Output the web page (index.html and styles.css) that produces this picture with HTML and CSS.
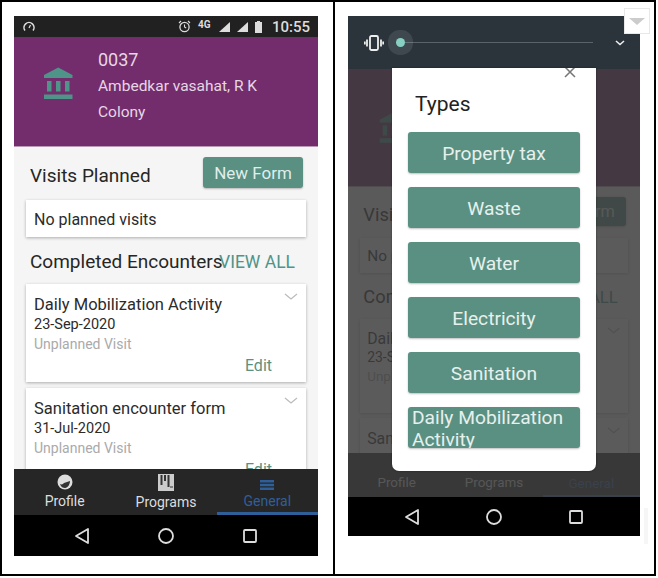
FILE: index.html
```html
<!DOCTYPE html>
<html lang="en">
<head>
    <meta charset="UTF-8">
    <title>Types</title>
    <link rel="stylesheet" href="styles.css">
</head>
<body>
<div class="frame">

    <div class="pane pane-left">
        <div class="phone phone-left">
            <div class="status">
                <svg class="status-gauge" width="12" height="12" viewBox="0 0 12 12"><path d="M2 9.500a5 5 0 1 1 8 0" fill="none" stroke="#ddd" stroke-width="1.600"/><path d="M6 7l1.500-3" stroke="#ddd" stroke-width="1.200"/></svg>
                <div class="status-right">
                    <svg width="13" height="13" viewBox="0 0 13 13"><circle cx="6.500" cy="7" r="4.600" fill="none" stroke="#ddd" stroke-width="1.300"/><path d="M6.500 4.500V7l1.700 1M1 3l2-2M12 3l-2-2" fill="none" stroke="#ddd" stroke-width="1.100"/></svg>
                    <span class="status-net">4G</span>
                    <svg width="14" height="12" viewBox="0 0 14 12"><path d="M13 1v10H2z" fill="#ddd"/></svg>
                    <svg class="status-signal" width="14" height="12" viewBox="0 0 14 12"><path d="M13 1v10H2z" fill="#ddd"/></svg>
                    <svg class="status-battery" width="7" height="12" viewBox="0 0 7 12"><path d="M2 0h3v1h2v11H0V1h2z" fill="#ddd"/></svg>
                    <span class="status-time">10:55</span>
                </div>
            </div>
            <div class="screen">
                <div class="hero">
                    <svg class="hero-icon" viewBox="0 0 24 24"><path d="M4 10v7h3v-7H4zm6 0v7h3v-7h-3zM2 22h19v-3H2v3zm14-12v7h3v-7h-3zm-4.500-9L2 6v2h19V6l-9.500-5z"/></svg>
                    <div class="hero-text">
                        <div class="hero-id">0037</div>
                        <div>Ambedkar vasahat, R K Colony</div>
                    </div>
                </div>
                <div class="main">
                    <div class="row-planned">
                        <span class="heading">Visits Planned</span>
                        <span class="new-form">New Form</span>
                    </div>
                    <div class="card card-empty">No planned visits</div>
                    <div class="row-completed">
                        <span class="heading">Completed Encounters</span>
                        <span class="view-all">VIEW ALL</span>
                    </div>
                    <div class="card card-visit">
                        <svg class="chevron" width="14" height="8" viewBox="0 0 14 8"><path d="M1 1l6 5 6-5" fill="none" stroke="#bbb" stroke-width="1.200"/></svg>
                        <div class="visit-title">Daily Mobilization Activity</div>
                        <div class="visit-date">23-Sep-2020</div>
                        <div class="visit-type">Unplanned Visit</div>
                        <div class="visit-edit">Edit</div>
                    </div>
                    <div class="card card-visit">
                        <svg class="chevron" width="14" height="8" viewBox="0 0 14 8"><path d="M1 1l6 5 6-5" fill="none" stroke="#bbb" stroke-width="1.200"/></svg>
                        <div class="visit-title">Sanitation encounter form</div>
                        <div class="visit-date">31-Jul-2020</div>
                        <div class="visit-type">Unplanned Visit</div>
                        <div class="visit-edit">Edit</div>
                    </div>
                </div>
                <div class="tabs">
                    <div class="tab">
                        <svg width="16" height="16" viewBox="0 0 16 16"><circle cx="8" cy="8" r="7.500" fill="#ddd"/><path d="M3 10c2 1 3 0 4-1l6-2c0 3-2 7-5 7-2 0-4-1-5-4z" fill="#333"/></svg>
                        <span>Profile</span>
                    </div>
                    <div class="tab">
                        <svg width="16" height="17" viewBox="0 0 16 17"><rect width="16" height="17" fill="#ccc"/><path d="M3.500 1v10M7 1v6M10.500 1v12" stroke="#333" stroke-width="2"/><path d="M12 13h3" stroke="#333"/></svg>
                        <span>Programs</span>
                    </div>
                    <div class="tab tab-active">
                        <svg width="14" height="10" viewBox="0 0 14 10"><path d="M0 0h14v2.500H0zM0 3.700h14v2.500H0zM0 7.500h14V10H0z" fill="#2f5f99"/></svg>
                        <span>General</span>
                    </div>
                </div>
            </div>
            <div class="nav">
                <svg width="16" height="18" viewBox="0 0 16 18"><path d="M14 2v14L2 9z" fill="none" stroke="#ddd" stroke-width="1.800" stroke-linejoin="round"/></svg>
                <svg width="18" height="18" viewBox="0 0 18 18"><circle cx="9" cy="9" r="7" fill="none" stroke="#ddd" stroke-width="1.800"/></svg>
                <svg width="16" height="16" viewBox="0 0 16 16"><rect x="2" y="2" width="12" height="12" rx="1" fill="none" stroke="#ddd" stroke-width="1.800"/></svg>
            </div>
        </div>
    </div>

    <div class="pane pane-right">
        <div class="phone phone-right">
            <div class="shade">
                <svg width="20" height="16" viewBox="0 0 20 16"><rect x="6" y="1" width="8" height="14" rx="1.500" fill="none" stroke="#eee" stroke-width="1.800"/><path d="M3 4.500v7M17 4.500v7M.8 6.500v3M19.200 6.500v3" stroke="#eee" stroke-width="1.800"/></svg>
                <div class="slider"><span class="slider-knob"></span></div>
                <svg width="10" height="6" viewBox="0 0 10 6"><path d="M1 1l4 3.500L9 1" fill="none" stroke="#eee" stroke-width="1.600"/></svg>
            </div>
            <div class="dimmed">
                <div class="screen screen-dim">
                    <div class="hero">
                        <svg class="hero-icon" viewBox="0 0 24 24"><path d="M4 10v7h3v-7H4zm6 0v7h3v-7h-3zM2 22h19v-3H2v3zm14-12v7h3v-7h-3zm-4.500-9L2 6v2h19V6l-9.500-5z"/></svg>
                    </div>
                    <div class="main">
                        <div class="row-planned">
                            <span class="heading">Visits Planned</span>
                            <span class="new-form">New Form</span>
                        </div>
                        <div class="card card-empty">No planned visits</div>
                        <div class="row-completed">
                            <span class="heading">Completed Encounters</span>
                            <span class="view-all">VIEW ALL</span>
                        </div>
                        <div class="card card-visit">
                            <svg class="chevron" width="14" height="8" viewBox="0 0 14 8"><path d="M1 1l6 5 6-5" fill="none" stroke="#bbb" stroke-width="1.200"/></svg>
                            <div class="visit-title">Daily Mobilization Activity</div>
                            <div class="visit-date">23-Sep-2020</div>
                            <div class="visit-type">Unplanned Visit</div>
                            <div class="visit-edit">Edit</div>
                        </div>
                        <div class="card card-visit">
                            <svg class="chevron" width="14" height="8" viewBox="0 0 14 8"><path d="M1 1l6 5 6-5" fill="none" stroke="#bbb" stroke-width="1.200"/></svg>
                            <div class="visit-title">Sanitation encounter form</div>
                        </div>
                    </div>
                    <div class="tabs">
                        <div class="tab"><span class="tab-spacer"></span><span>Profile</span></div>
                        <div class="tab"><span class="tab-spacer"></span><span>Programs</span></div>
                        <div class="tab tab-active"><span class="tab-spacer"></span><span>General</span></div>
                    </div>
                </div>
            </div>
            <div class="nav">
                <svg width="16" height="18" viewBox="0 0 16 18"><path d="M14 2v14L2 9z" fill="none" stroke="#ddd" stroke-width="1.800" stroke-linejoin="round"/></svg>
                <svg width="18" height="18" viewBox="0 0 18 18"><circle cx="9" cy="9" r="7" fill="none" stroke="#ddd" stroke-width="1.800"/></svg>
                <svg width="16" height="16" viewBox="0 0 16 16"><rect x="2" y="2" width="12" height="12" rx="1" fill="none" stroke="#ddd" stroke-width="1.800"/></svg>
            </div>
            <div class="modal">
                <svg class="modal-close" width="12" height="12" viewBox="0 0 12 12"><path d="M1 1l10 10M11 1L1 11" stroke="#777" stroke-width="1.500"/></svg>
                <div class="modal-title">Types</div>
                <div class="type-list">
                    <div class="type-btn">Property tax</div>
                    <div class="type-btn">Waste</div>
                    <div class="type-btn">Water</div>
                    <div class="type-btn">Electricity</div>
                    <div class="type-btn">Sanitation</div>
                    <div class="type-btn type-btn-long">Daily Mobilization Activity</div>
                </div>
            </div>
        </div>
        <div class="drop-box"><span class="drop-arrow"></span></div>
        <div class="edge-strip"></div>
    </div>

</div>
</body>
</html>
```

FILE: styles.css
```css
* {
  box-sizing: border-box;
}

body {
  margin: 0;
  background: #fff;
  font-family: Roboto, "Liberation Sans", sans-serif;
  color: #2b2b2b;
}

.frame {
  display: flex;
  width: 656px;
  height: 576px;
  border: 2px solid #000;
}

.pane {
  position: relative;
  height: 100%;
}

.pane-left {
  width: 333px;
  padding: 14px 0 0 12px;
  border-right: 2px solid #000;
}

.pane-right {
  flex: 1;
  padding: 14px 0 0 13px;
}

.phone {
  position: relative;
  display: flex;
  flex-direction: column;
  overflow: hidden;
}

.phone-left {
  width: 304px;
  height: 540px;
}

.phone-right {
  width: 292px;
  height: 520px;
}

/* status bar */
.status {
  display: flex;
  justify-content: space-between;
  align-items: center;
  height: 21px;
  padding: 0 8px 0 9px;
  background: #212121;
  color: #ddd;
}

.status-right {
  display: flex;
  align-items: center;
}

.status-net {
  width: 14px;
  margin: 0 5px 4px 7px;
  font-size: 10px;
  font-weight: 700;
}

.status-signal {
  margin-left: 4px;
}

.status-battery {
  margin-left: 6px;
}

.status-time {
  margin-left: 10px;
  font-size: 15px;
  font-weight: 500;
}

/* app screen */
.screen {
  flex: 1;
  display: flex;
  flex-direction: column;
  min-height: 0;
  background: #f5f5f5;
}

.hero {
  display: flex;
  height: 110px;
  padding: 10px 0 0 27px;
  flex-shrink: 0;
  background: #732d6d;
  border-bottom: 1px solid #b99ab5;
  color: #e6d6e4;
  font-size: 15.5px;
  line-height: 26px;
}

.hero-icon {
  width: 36px;
  height: 36px;
  margin-top: 19px;
  fill: #4f9488;
}

.hero-text {
  width: 180px;
  margin-left: 21px;
}

.hero-id {
  font-size: 18px;
}

.main {
  flex: 1;
  min-height: 0;
  overflow: hidden;
}

.row-planned {
  display: flex;
  justify-content: space-between;
  align-items: flex-end;
  padding: 10px 15px 0 16px;
}

.heading {
  font-size: 19px;
  color: #262626;
}

.row-planned .heading {
  margin-bottom: 1px;
}

.new-form {
  width: 100px;
  height: 31px;
  border-radius: 3px;
  background: #5a9082;
  color: #dfeeea;
  font-size: 17px;
  line-height: 32px;
  text-align: center;
  box-shadow: 0 1px 2px rgba(0, 0, 0, .25);
}

.card {
  position: relative;
  margin: 0 12px;
  padding: 0 8px;
  background: #fff;
  box-shadow: 0 1px 3px rgba(0, 0, 0, .3);
}

.card-empty {
  height: 37px;
  margin-top: 12px;
  font-size: 16px;
  line-height: 39px;
}

.row-completed {
  display: flex;
  justify-content: space-between;
  align-items: center;
  height: 47px;
  padding: 2px 23px 0 16px;
  white-space: nowrap;
}

.row-completed .heading {
  margin-right: -10px;
}

.view-all {
  color: #4f9488;
  font-size: 17.5px;
}

.card-visit {
  height: 98px;
  margin-bottom: 6px;
  padding-top: 11px;
}

.chevron {
  position: absolute;
  top: 9px;
  right: 8px;
}

.visit-title {
  font-size: 16.5px;
  line-height: 20px;
}

.visit-date {
  font-size: 14.5px;
  line-height: 20px;
}

.visit-type {
  font-size: 14px;
  line-height: 18px;
  color: #aaa;
}

.visit-edit {
  margin-top: 3px;
  padding-right: 26px;
  color: #5a9082;
  font-size: 16px;
  line-height: 20px;
  text-align: right;
}

/* bottom bars */
.tabs {
  display: flex;
  height: 46px;
  flex-shrink: 0;
  background: #262626;
  color: #ddd;
  font-size: 14px;
}

.tab {
  flex: 1;
  display: flex;
  flex-direction: column;
  align-items: center;
  justify-content: flex-start;
  padding-top: 5px;
  gap: 3px;
  height: 46px;
}

.tab span {
  line-height: 17px;
}

.tab .tab-spacer {
  height: 15px;
}

.tab-active {
  padding-top: 11px;
  color: #2f5f99;
  border-bottom: 3px solid #2f5f99;
}

.tab-active .tab-spacer {
  height: 10px;
}

.nav {
  display: flex;
  justify-content: space-around;
  align-items: center;
  height: 41px;
  padding: 0 26px;
  flex-shrink: 0;
  background: #000;
}

.phone-right .nav {
  height: 39px;
  padding: 0 24px;
}

/* right hand side */
.shade {
  display: flex;
  align-items: center;
  height: 53px;
  flex-shrink: 0;
  padding: 0 15px 0 16px;
  background: #2b343b;
}

.slider {
  position: relative;
  flex: 1;
  height: 1px;
  margin: 0 22px 0 12px;
  background: #59636a;
}

.slider-knob {
  position: absolute;
  top: -4px;
  left: 0;
  width: 9px;
  height: 9px;
  border-radius: 50%;
  background: #86cfc2;
  box-shadow: 0 0 0 8px rgba(255, 255, 255, .1);
}

.dimmed {
  position: relative;
  flex: 1;
  min-height: 0;
  display: flex;
}

.dimmed::after {
  content: "";
  position: absolute;
  top: 0;
  right: 0;
  bottom: 0;
  left: 0;
  background: rgba(60, 60, 60, .84);
}

.screen-dim {
  zoom: .96;
}

.screen-dim .hero {
  height: 123px;
  padding: 25px 0 0 30px;
}

.modal {
  position: absolute;
  top: 52px;
  left: 44px;
  width: 204px;
  height: 403px;
  overflow: hidden;
  padding: 0 16px;
  border-radius: 0 0 7px 7px;
  background: #fff;
  box-shadow: 0 0 2px rgba(0, 0, 0, .5);
}

.modal-close {
  position: absolute;
  top: -2px;
  right: 20px;
}

.modal-title {
  padding: 24px 0 0 7px;
  height: 64px;
  color: #222;
  font-size: 21px;
  line-height: 25px;
}

.type-list {
  display: flex;
  flex-direction: column;
  gap: 14px;
}

.type-btn {
  height: 41px;
  overflow: hidden;
  border-radius: 3px;
  background: #5a9082;
  color: #e6f0ed;
  font-size: 19.2px;
  line-height: 43px;
  text-align: center;
  box-shadow: 0 1px 2px rgba(0, 0, 0, .25);
}

.type-btn-long {
  padding: 0 4px;
  line-height: 22px;
  text-align: left;
}

.drop-box {
  position: absolute;
  top: 6px;
  right: 4px;
  display: flex;
  justify-content: center;
  padding-top: 9px;
  width: 26px;
  height: 26px;
  background: #fff;
  border: 1px solid #e8e8e8;
}

.drop-arrow {
  width: 0;
  height: 0;
  border-left: 8px solid transparent;
  border-right: 8px solid transparent;
  border-top: 7px solid #ccc;
}

.edge-strip {
  position: absolute;
  top: 506px;
  right: 6px;
  width: 4px;
  height: 36px;
  background: #f6f6f6;
}
```
